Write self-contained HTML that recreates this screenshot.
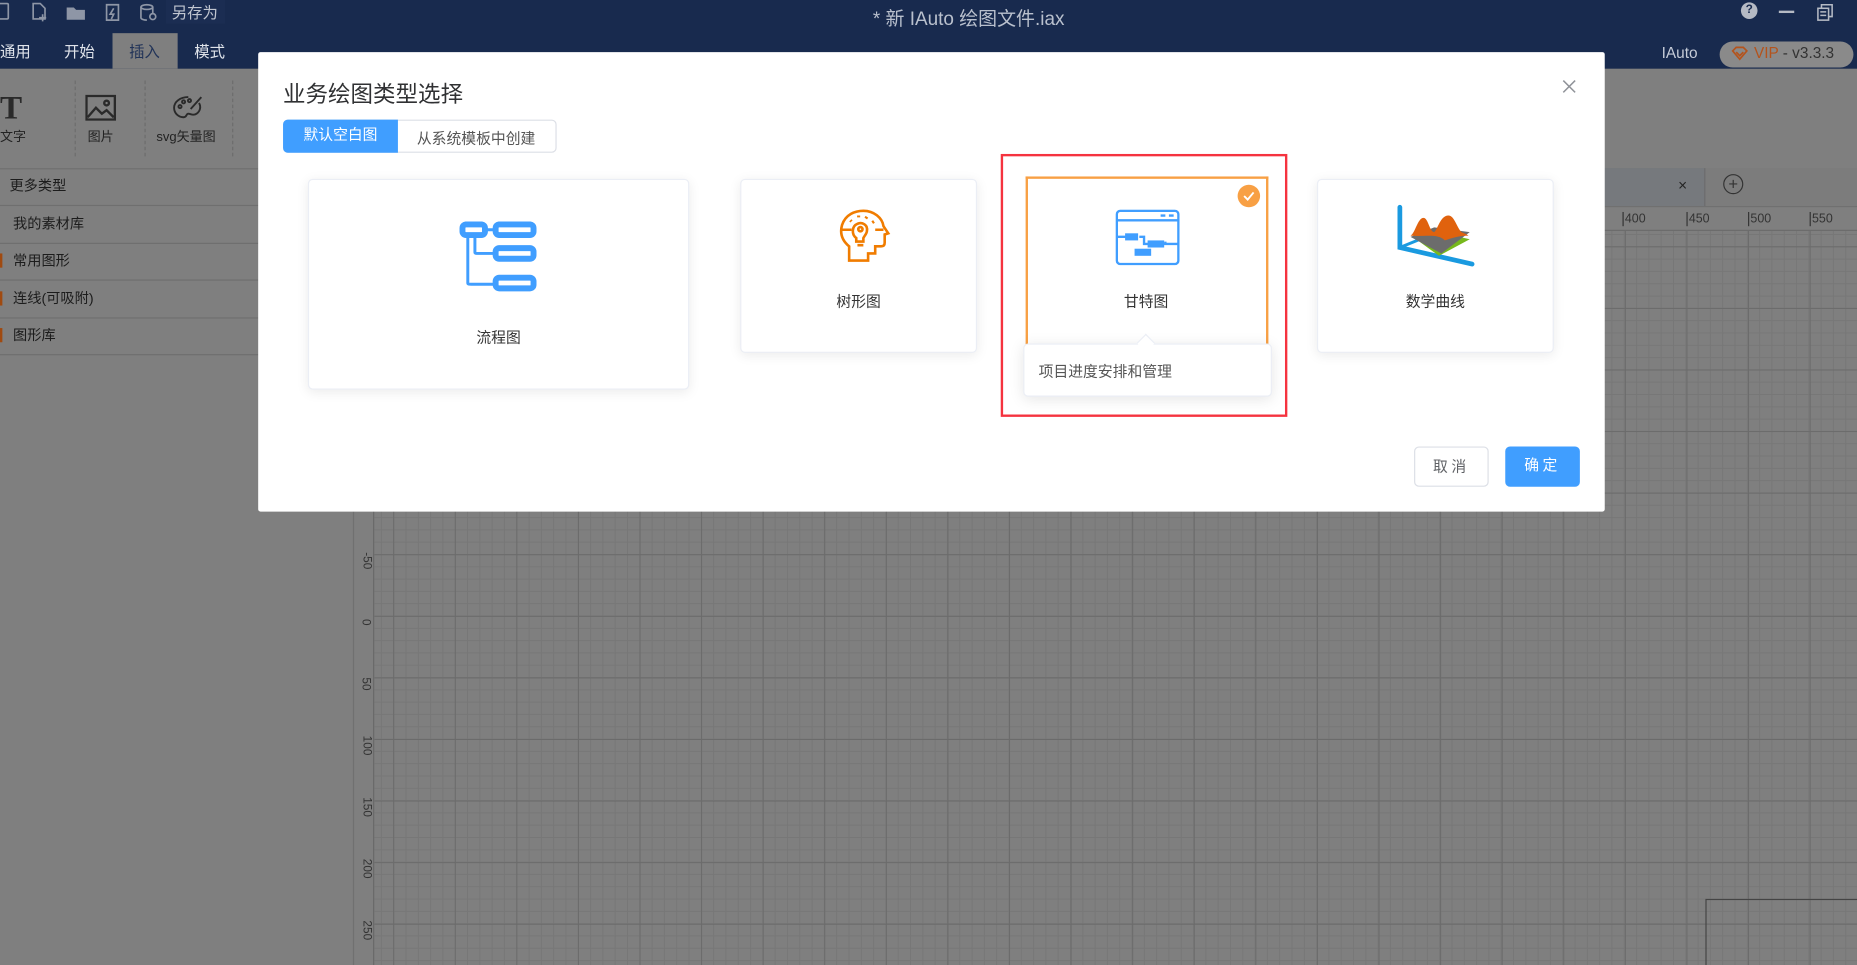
<!DOCTYPE html>
<html><head><meta charset="utf-8"><style>
*{margin:0;padding:0;box-sizing:border-box}
html,body{width:1857px;height:965px;overflow:hidden;background:#7f7f7f}
body{font-family:"Liberation Sans","Noto Sans CJK SC",sans-serif}
#root{position:absolute;left:0;top:0;width:1568px;height:815px;transform:scale(1.18431);transform-origin:0 0;overflow:hidden;background:#7f7f7f}
.a{position:absolute}
.t{position:absolute;white-space:nowrap}
.grid{position:absolute;left:316px;top:195px;right:0;bottom:0;background-color:#7f7f7f;
background-image:linear-gradient(#6b6b6b 1px,transparent 1px),linear-gradient(90deg,#6b6b6b 1px,transparent 1px),linear-gradient(#777 1px,transparent 1px),linear-gradient(90deg,#777 1px,transparent 1px);
background-size:52px 52px,52px 52px,10.4px 10.4px,10.4px 10.4px;background-position:0 13px,16px 0,0 13px,16px 0}
.card{position:absolute;background:#fff;border:1px solid #ebeef5;border-radius:4px;box-shadow:0 2px 10px rgba(0,0,0,.08)}
.lbl{position:absolute;left:0;right:0;text-align:center;font-size:12.5px;color:#333}
.row{position:absolute;left:0;width:298px;height:32px;border-bottom:1px solid #6f6f6f;font-size:12px;color:#1c1c1c;line-height:30px}
</style></head><body><div id="root">
<div class="a" style="left:0;top:0;width:1568px;height:58px;background:#182a4e"></div>
<svg class="a" style="left:0;top:0" width="200" height="22" fill="none" stroke="#8e96a6" stroke-width="1.4">
<rect x="-3" y="3" width="10" height="13" rx="1"/>
<path d="M28 3h6l4 4v9h-10z M36 12v6M33 15h6"/>
<path d="M57 7h5l2 2h7v7H57z" fill="#8e96a6"/>
<path d="M90 4h10v13H90z M96 7l-3 5h3l-2 4"/>
<ellipse cx="124" cy="6" rx="5" ry="2"/><path d="M119 6v9c0 1 2 2 5 2M129 6v5"/><circle cx="129" cy="14" r="2.5"/>
</svg>
<div class="a" style="left:140px;top:0;width:50px;height:20px;background:#1b2d52"></div>
<div class="t" style="left:145px;top:0px;font-size:13px;color:#c2c7d1">另存为</div>
<div class="t" style="left:737px;top:2px;font-size:16px;color:#b9c0cd">* 新 IAuto 绘图文件.iax</div>
<div class="a" style="left:1470px;top:2px;width:14px;height:14px;border-radius:50%;background:#b5bac4;color:#182a4e;font-size:10px;font-weight:bold;text-align:center;line-height:14px">?</div>
<div class="a" style="left:1502px;top:9px;width:13px;height:1.5px;background:#b5bac4"></div>
<svg class="a" style="left:1533px;top:2px" width="16" height="16" fill="none" stroke="#b5bac4" stroke-width="1.3"><rect x="2" y="5" width="9" height="10"/><path d="M5 5V2h9v10h-3M4 8h5M4 11h5"/></svg>
<div class="t" style="left:0;top:33px;font-size:13px;color:#dfe3ea">通用</div>
<div class="t" style="left:54px;top:33px;font-size:13px;color:#dfe3ea">开始</div>
<div class="a" style="left:95px;top:28px;width:55px;height:30px;background:#7f7f7f"></div>
<div class="t" style="left:109px;top:33px;font-size:13px;color:#213358">插入</div>
<div class="t" style="left:164px;top:33px;font-size:13px;color:#dfe3ea">模式</div>
<div class="t" style="left:1403px;top:37px;font-size:13px;color:#c6ccd8">IAuto</div>
<div class="a" style="left:1452px;top:35px;width:113px;height:22px;border-radius:11px;background:#8a8a8a"></div>
<svg class="a" style="left:1462px;top:39px" width="14" height="13" fill="none" stroke="#b4531c" stroke-width="1.4"><path d="M1 4l3-3h6l3 3-6 7z M4 5l3 3 3-3"/></svg>
<div class="t" style="left:1481px;top:37px;font-size:13px;color:#333"><span style="color:#b4531c">VIP</span> - v3.3.3</div>
<div class="t" style="left:0;top:76px;font-size:28px;font-family:'Liberation Serif',serif;font-weight:bold;color:#2a2a2a">T</div>
<div class="t" style="left:0;top:107px;font-size:11px;color:#222">文字</div>
<div class="a" style="left:63px;top:68px;height:64px;border-left:1px dashed #6c6c6c"></div>
<svg class="a" style="left:72px;top:80px" width="26" height="22" fill="none" stroke="#2a2a2a" stroke-width="2"><rect x="1" y="1" width="24" height="20"/><path d="M2 19l7-8 5 5 4-3 6 6"/><circle cx="18" cy="7" r="2"/></svg>
<div class="t" style="left:74px;top:107px;font-size:11px;color:#222">图片</div>
<div class="a" style="left:122px;top:68px;height:64px;border-left:1px dashed #6c6c6c"></div>
<svg class="a" style="left:146px;top:80px" width="26" height="22" fill="none" stroke="#2a2a2a" stroke-width="1.6"><path d="M13 2C6 2 1 6 1 11c0 5 4 8 8 8 3 0 2-3 4-3s4 2 7 0c3-2 4-6 2-9"/><circle cx="6" cy="10" r="1.3"/><circle cx="9" cy="6" r="1.3"/><circle cx="14" cy="5" r="1.3"/><path d="M24 2l-9 10"/></svg>
<div class="t" style="left:132px;top:107px;font-size:11px;color:#222">svg矢量图</div>
<div class="a" style="left:196px;top:68px;height:64px;border-left:1px dashed #6c6c6c"></div>
<div class="a" style="left:0;top:142px;width:298px;height:1px;background:#6f6f6f"></div>
<div class="row" style="top:142px;padding-left:8px">更多类型</div>
<div class="row" style="top:174px;padding-left:11px">我的素材库</div>
<div class="row" style="top:205px;padding-left:11px">常用图形</div>
<div class="row" style="top:237px;padding-left:11px">连线(可吸附)</div>
<div class="row" style="top:268px;padding-left:11px">图形库</div>
<div class="a" style="left:0;top:214px;width:2px;height:12px;background:#a04a10"></div>
<div class="a" style="left:0;top:246px;width:2px;height:12px;background:#a04a10"></div>
<div class="a" style="left:0;top:277px;width:2px;height:12px;background:#a04a10"></div>
<div class="a" style="left:298px;top:142px;width:1270px;height:33px;background:#7c7c7c;border-bottom:1px solid #6f6f6f"></div>
<div class="a" style="left:1200px;top:142px;width:240px;height:32px;background:#76797d;border-right:1px solid #6c6c6c"></div>
<div class="t" style="left:1417px;top:149px;font-size:13px;color:#222">×</div>
<div class="a" style="left:1455px;top:147px;width:17px;height:17px;border:1px solid #333;border-radius:50%;text-align:center;line-height:14px;font-size:14px;color:#333">+</div>
<div class="a" style="left:298px;top:175px;width:1270px;height:20px;background:#7f7f7f;border-bottom:1px solid #6a6a6a"></div>
<div class="t" style="left:1370px;top:179px;font-size:10.5px;color:#333;border-left:1px solid #333;padding-left:1px">400</div>
<div class="t" style="left:1424px;top:179px;font-size:10.5px;color:#333;border-left:1px solid #333;padding-left:1px">450</div>
<div class="t" style="left:1476px;top:179px;font-size:10.5px;color:#333;border-left:1px solid #333;padding-left:1px">500</div>
<div class="t" style="left:1528px;top:179px;font-size:10.5px;color:#333;border-left:1px solid #333;padding-left:1px">550</div>
<div class="grid"></div>
<div class="a" style="left:298px;top:195px;width:18px;height:620px;background:#7f7f7f;border-right:1px solid #6a6a6a;border-left:1px solid #707070"></div>
<div class="t" style="left:302px;top:468px;font-size:10px;color:#333;transform:rotate(90deg)">-50</div>
<div class="t" style="left:306px;top:520px;font-size:10px;color:#333;transform:rotate(90deg)">0</div>
<div class="t" style="left:303px;top:572px;font-size:10px;color:#333;transform:rotate(90deg)">50</div>
<div class="t" style="left:301px;top:624px;font-size:10px;color:#333;transform:rotate(90deg)">100</div>
<div class="t" style="left:301px;top:676px;font-size:10px;color:#333;transform:rotate(90deg)">150</div>
<div class="t" style="left:301px;top:728px;font-size:10px;color:#333;transform:rotate(90deg)">200</div>
<div class="t" style="left:301px;top:780px;font-size:10px;color:#333;transform:rotate(90deg)">250</div>
<div class="a" style="left:1440px;top:759px;width:140px;height:70px;border:1px solid #444"></div>
<div class="a" style="left:218px;top:44px;width:1137px;height:388px;background:#fff;border-radius:2px"></div>
<div class="t" style="left:239px;top:65px;font-size:19px;color:#303133">业务绘图类型选择</div>
<svg class="a" style="left:1319px;top:67px" width="12" height="12" stroke="#909399" stroke-width="1.3"><path d="M1 1l10 10M11 1L1 11"/></svg>
<div class="a" style="left:239px;top:101px;width:231px;height:28px;border:1px solid #dcdfe6;border-radius:4px"></div>
<div class="a" style="left:239px;top:101px;width:97px;height:28px;background:#409eff;border-radius:4px 0 0 4px;color:#fff;font-size:12.5px;text-align:center;line-height:27px">默认空白图</div>
<div class="t" style="left:352px;top:106px;font-size:12.5px;color:#555">从系统模板中创建</div>
<div class="card" style="left:260px;top:151px;width:322px;height:178px">
<svg class="a" style="left:127px;top:35px" width="67" height="60" fill="none" stroke="#409eff"><rect x="2.5" y="2.5" width="19" height="9" rx="3" stroke-width="5"/><rect x="30.5" y="2.5" width="32" height="9" rx="3" stroke-width="5"/><rect x="30.5" y="22.5" width="32" height="9" rx="3" stroke-width="5"/><rect x="30.5" y="47.5" width="32" height="9" rx="3" stroke-width="5"/><path d="M22 7h8M7 12v40c0 1 1 1 3 1h20M13 12v14c0 1 1 1 3 1h14" stroke-width="2.5"/></svg>
<div class="lbl" style="top:122px">流程图</div></div>
<div class="card" style="left:625px;top:151px;width:200px;height:147px">
<svg class="a" style="left:82px;top:24px" width="44" height="48" fill="none" stroke="#f07c00" stroke-width="2.2"><path d="M9 44V32C3 27 1 21 3 14 6 5 14 2 21 2c9 0 16 6 17 13l4 6-3 1v7c0 2-1 3-3 3h-5v6h-6v6z"/><path d="M3 18h8M31 18h7"/><path d="M15 25c-4-3-4-10 1-12 4-2 9 1 8 6 0 2-2 4-3 6v3h-6z"/><circle cx="18.5" cy="17.5" r="1.8"/><path d="M16 31h5"/><path d="M10 10l1 1M17 6v1.5M24 7l-1 1.5M30 11l-1.5 1" stroke-width="2.6"/></svg>
<div class="lbl" style="top:92px">树形图</div></div>
<div class="a" style="left:845px;top:130px;width:242px;height:222px;border:2px solid #f5333f"></div>
<div class="a" style="left:866px;top:149px;width:205px;height:142px;background:#fff;border:2px solid #f8a044;border-bottom:none"></div>
<div class="a" style="left:1045px;top:156px;width:19px;height:19px;border-radius:50%;background:#f8a044"></div>
<svg class="a" style="left:1049px;top:160px" width="11" height="11" fill="none" stroke="#fff" stroke-width="1.6"><path d="M1.5 5.5l3 3 5-6"/></svg>
<svg class="a" style="left:942px;top:177px" width="54" height="47" fill="none" stroke="#409eff" stroke-width="2"><rect x="1" y="1" width="52" height="45" rx="3"/><path d="M1 9h52M38 5h4M45 5h4M1 23h8M20 23h4v6h18v-2M42 29h11"/><rect x="8" y="20" width="11" height="6" fill="#409eff" stroke="none"/><rect x="27" y="26" width="14" height="6" fill="#409eff" stroke="none"/><rect x="16" y="33" width="14" height="6" fill="#409eff" stroke="none"/></svg>
<div class="t" style="left:949px;top:244px;font-size:12.5px;color:#333">甘特图</div>
<div class="a" style="left:864px;top:290px;width:210px;height:45px;background:#fff;border:1px solid #ebeef5;border-radius:4px;box-shadow:0 2px 12px rgba(0,0,0,.1)"></div>
<div class="a" style="left:962px;top:284px;width:11px;height:11px;background:#fff;transform:rotate(45deg);border-left:1px solid #ebeef5;border-top:1px solid #ebeef5"></div>
<div class="t" style="left:877px;top:303px;font-size:12.5px;color:#555">项目进度安排和管理</div>
<div class="card" style="left:1112px;top:151px;width:200px;height:147px">
<svg class="a" style="left:66px;top:20px" width="68" height="58"><path d="M3 3v34l61 14" fill="none" stroke="#1a9ae0" stroke-width="4" stroke-linecap="round"/><path d="M3 37l22-9" stroke="#1a9ae0" stroke-width="2.5"/><path d="M14 28l22-4 26 6-26 14z" fill="#77b81c"/><path d="M12 28l20-8 30 4-24 18z" fill="#6c6c6c"/><path d="M12 27c4-2 6-15 11-15 4 0 5 12 9 12 3-2 5-14 12-14 5 0 7 10 11 14 2 1 5 2 6 3-8 0-14 2-20 4-6-6-16-3-29-4z" fill="#e0620e"/></svg>
<div class="lbl" style="top:92px">数学曲线</div></div>
<div class="a" style="left:1194px;top:377px;width:63px;height:34px;border:1px solid #dcdfe6;border-radius:4px;text-align:center;line-height:32px;font-size:12.5px;color:#606266;letter-spacing:3px">取消</div>
<div class="a" style="left:1271px;top:377px;width:63px;height:34px;background:#409eff;border-radius:4px;text-align:center;line-height:33px;font-size:12.5px;color:#fff;letter-spacing:3px">确定</div>
</div></body></html>
